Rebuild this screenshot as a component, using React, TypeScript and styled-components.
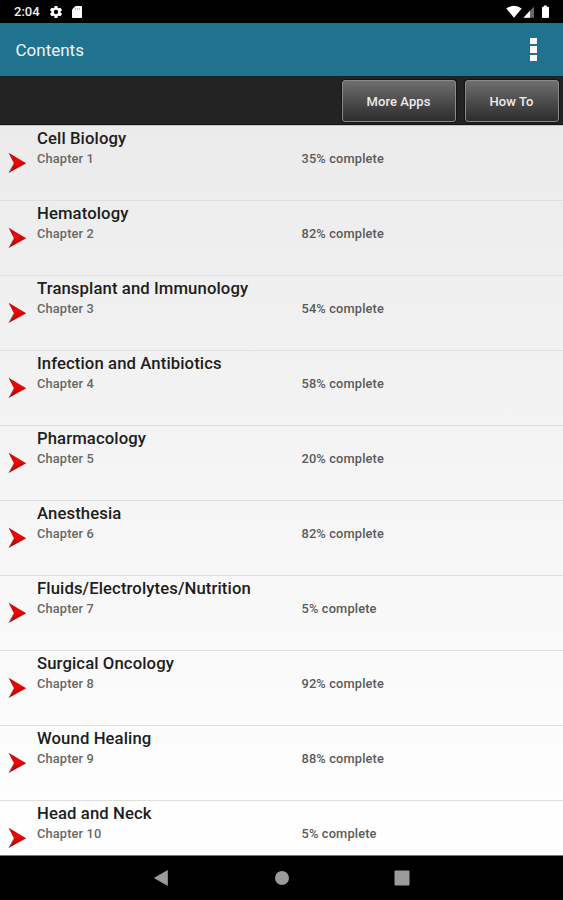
import React from 'react';
import styled, { createGlobalStyle } from 'styled-components';

const GlobalStyle = createGlobalStyle`
  *, *::before, *::after { box-sizing: border-box; }
  html, body { margin: 0; padding: 0; background: #000; }
  body { font-family: Roboto, "Liberation Sans", sans-serif; overflow: hidden; }
`;

const Screen = styled.div`
  display: flex;
  flex-direction: column;
  width: 563px;
  height: 900px;
  overflow: hidden;
  background: #000;
`;

const StatusBar = styled.header`
  display: flex;
  flex: none;
  align-items: center;
  height: 23px;
  padding: 1px 13px 0 14px;
  color: #f0f0f0;
  background: #000;
`;

const Clock = styled.span`
  width: 35px;
  font-size: 13px;
  font-weight: 500;
  line-height: 16px;
`;

const StatusIcon = styled.svg<{ $w: number; $gap?: number }>`
  display: block;
  flex: none;
  width: ${(p) => p.$w}px;
  height: 14px;
  margin-right: ${(p) => p.$gap ?? 0}px;
`;

const Spacer = styled.div`
  flex: 1;
`;

const AppBar = styled.div`
  display: flex;
  flex: none;
  align-items: center;
  justify-content: space-between;
  height: 53px;
  padding: 0 26px 0 15.5px;
  background: #20738f;
`;

const Heading = styled.h1`
  margin: 0;
  color: #eef6f9;
  font-size: 17px;
  font-weight: 400;
  line-height: 20px;
`;

const MenuButton = styled.button`
  display: flex;
  flex-direction: column;
  gap: 2px;
  padding: 0;
  border: 0;
  background: none;
`;

const MenuDot = styled.span`
  width: 7px;
  height: 6.5px;
  background: #fff;
`;

const Toolbar = styled.div`
  display: flex;
  flex: none;
  justify-content: flex-end;
  gap: 9px;
  height: 49px;
  padding: 4px 4px 0 0;
  border-top: 1px solid #1a2022;
  border-bottom: 1px solid #111;
  background: #232323;
`;

const ToolButton = styled.button<{ $w: number }>`
  width: ${(p) => p.$w}px;
  height: 42px;
  margin-top: -1px;
  padding: 1px 1px 0 0;
  border: 1px solid #8a8a8a;
  border-radius: 3px;
  background: linear-gradient(#6e6e6e, #2c2c2c);
  box-shadow: 0 0 0 1px #141414;
  color: #ececec;
  font: 500 13px/16px Roboto, sans-serif;
  letter-spacing: 0.1px;
`;

const List = styled.ul`
  flex: none;
  height: 731px;
  margin: 0;
  padding: 0;
  overflow: hidden;
  list-style: none;
  border-top: 1px solid #c8c8c8;
  border-bottom: 1px solid #777;
  background: linear-gradient(#ebebeb, #fff);
`;

const Row = styled.li`
  display: grid;
  grid-template-columns: 37px 264.5px 1fr;
  grid-template-rows: 24px 18px;
  height: 75px;
  border-bottom: 1px solid #dfdfdf;
`;

const ArrowCell = styled.div`
  grid-row: 1 / 3;
  padding: 25.5px 0 0 8px;
`;

const ArrowSvg = styled.svg`
  display: block;
  width: 19px;
  height: 22px;
`;

const Title = styled.div`
  grid-column: 2 / 4;
  padding-top: 3px;
  color: #1d1d1d;
  font-size: 16.7px;
  font-weight: 500;
  letter-spacing: 0.1px;
  line-height: 20px;
  white-space: nowrap;
`;

const Detail = styled.div`
  color: #686868;
  font-size: 12.8px;
  font-weight: 500;
  letter-spacing: 0.15px;
  line-height: 18px;
`;

const Progress = styled(Detail)`
  color: #5a5a5a;
`;

const NavBar = styled.nav`
  display: grid;
  flex: none;
  grid-template-columns: 120px 120px 120px;
  justify-content: center;
  justify-items: center;
  align-items: center;
  height: 44px;
  background: #000;
`;

const NavIcon = styled.svg`
  display: block;
  width: 20px;
  height: 20px;
  fill: #9b9b9b;
`;

const chapters: [string, number][] = [
  ['Cell Biology', 35],
  ['Hematology', 82],
  ['Transplant and Immunology', 54],
  ['Infection and Antibiotics', 58],
  ['Pharmacology', 20],
  ['Anesthesia', 82],
  ['Fluids/Electrolytes/Nutrition', 5],
  ['Surgical Oncology', 92],
  ['Wound Healing', 88],
  ['Head and Neck', 5],
];

function Arrow() {
  return (
    <ArrowSvg viewBox="0 0 19 22">
      <defs>
        <linearGradient id="arrowRed" x1="0" y1="0" x2="0.25" y2="1">
          <stop offset="0" stopColor="#c40000" />
          <stop offset="0.5" stopColor="#f00808" />
          <stop offset="1" stopColor="#a80000" />
        </linearGradient>
      </defs>
      <path d="M0.6 0.8 L18.2 11.2 L1 20.8 L6 11.4 Z" fill="url(#arrowRed)" />
      <path d="M1 20.8 L6 11.4" stroke="#7d5a5a" strokeWidth="0.8" fill="none" />
    </ArrowSvg>
  );
}

export default function App() {
  return (
    <>
      <GlobalStyle />
      <Screen>
        <StatusBar>
          <Clock>2:04</Clock>
          <StatusIcon $w={14} $gap={8} viewBox="1 1 22 22" fill="#fff">
            <path d="M19.14 12.94c.04-.3.06-.61.06-.94s-.02-.64-.07-.94l2.03-1.58a.49.49 0 0 0 .12-.61l-1.92-3.32a.49.49 0 0 0-.59-.22l-2.39.96a7 7 0 0 0-1.62-.94l-.36-2.54A.48.48 0 0 0 13.92 2.4h-3.84a.48.48 0 0 0-.48.41l-.36 2.54a7 7 0 0 0-1.62.94l-2.39-.96a.48.48 0 0 0-.59.22L2.74 8.87a.48.48 0 0 0 .12.61l2.03 1.58a6 6 0 0 0 0 1.88l-2.03 1.58a.49.49 0 0 0-.12.61l1.92 3.32c.12.22.37.29.59.22l2.39-.96c.5.38 1.03.7 1.62.94l.36 2.54c.05.24.24.41.48.41h3.84c.24 0 .44-.17.48-.41l.36-2.54a7 7 0 0 0 1.62-.94l2.39.96c.22.08.47 0 .59-.22l1.92-3.32a.48.48 0 0 0-.12-.61zM12 15.4a3.4 3.4 0 1 1 0-6.8 3.4 3.4 0 0 1 0 6.8z" />
          </StatusIcon>
          <StatusIcon $w={12} viewBox="0 0 12 14">
            <path d="M4.5 1H10q1 0 1 1v10q0 1-1 1H2q-1 0-1-1V4.5Z" fill="#fff" />
            <path d="M4.6 3v1.8M6.6 3v1.8M8.6 3v1.8" stroke="#999" strokeWidth="0.8" />
          </StatusIcon>
          <Spacer />
          <StatusIcon $w={16} $gap={1} viewBox="0 0 16 14">
            <path d="M0.3 3.4Q8-1.8 15.7 3.4L8 12.8Z" fill="#fff" />
          </StatusIcon>
          <StatusIcon $w={12} $gap={6} viewBox="0 0 12 14">
            <path d="M0.5 12.8 11 1.5V12.8Z" fill="#686868" />
            <path d="M0.5 12.8 7 5.8V12.8Z" fill="#fff" />
          </StatusIcon>
          <StatusIcon $w={9} viewBox="0 0 9 14">
            <path d="M2.8 0.5h3v1.2H7q1 0 1 1V12q0 1-1 1H2q-1 0-1-1V2.7q0-1 1-1h.8Z" fill="#fff" />
          </StatusIcon>
        </StatusBar>
        <AppBar>
          <Heading>Contents</Heading>
          <MenuButton aria-label="Menu">
            <MenuDot />
            <MenuDot />
            <MenuDot />
          </MenuButton>
        </AppBar>
        <Toolbar>
          <ToolButton $w={114}>More Apps</ToolButton>
          <ToolButton $w={94}>How To</ToolButton>
        </Toolbar>
        <List>
          {chapters.map(([title, percent], i) => (
            <Row key={title}>
              <ArrowCell>
                <Arrow />
              </ArrowCell>
              <Title>{title}</Title>
              <Detail>Chapter {i + 1}</Detail>
              <Progress>{percent}% complete</Progress>
            </Row>
          ))}
        </List>
        <NavBar>
          <NavIcon viewBox="0 0 20 20">
            <path d="M1.8 10 15.8 2v16Z" />
          </NavIcon>
          <NavIcon viewBox="0 0 20 20">
            <circle cx="10" cy="10" r="7" />
          </NavIcon>
          <NavIcon viewBox="0 0 20 20">
            <rect x="2.5" y="2.5" width="15" height="15" rx="1" />
          </NavIcon>
        </NavBar>
      </Screen>
    </>
  );
}
